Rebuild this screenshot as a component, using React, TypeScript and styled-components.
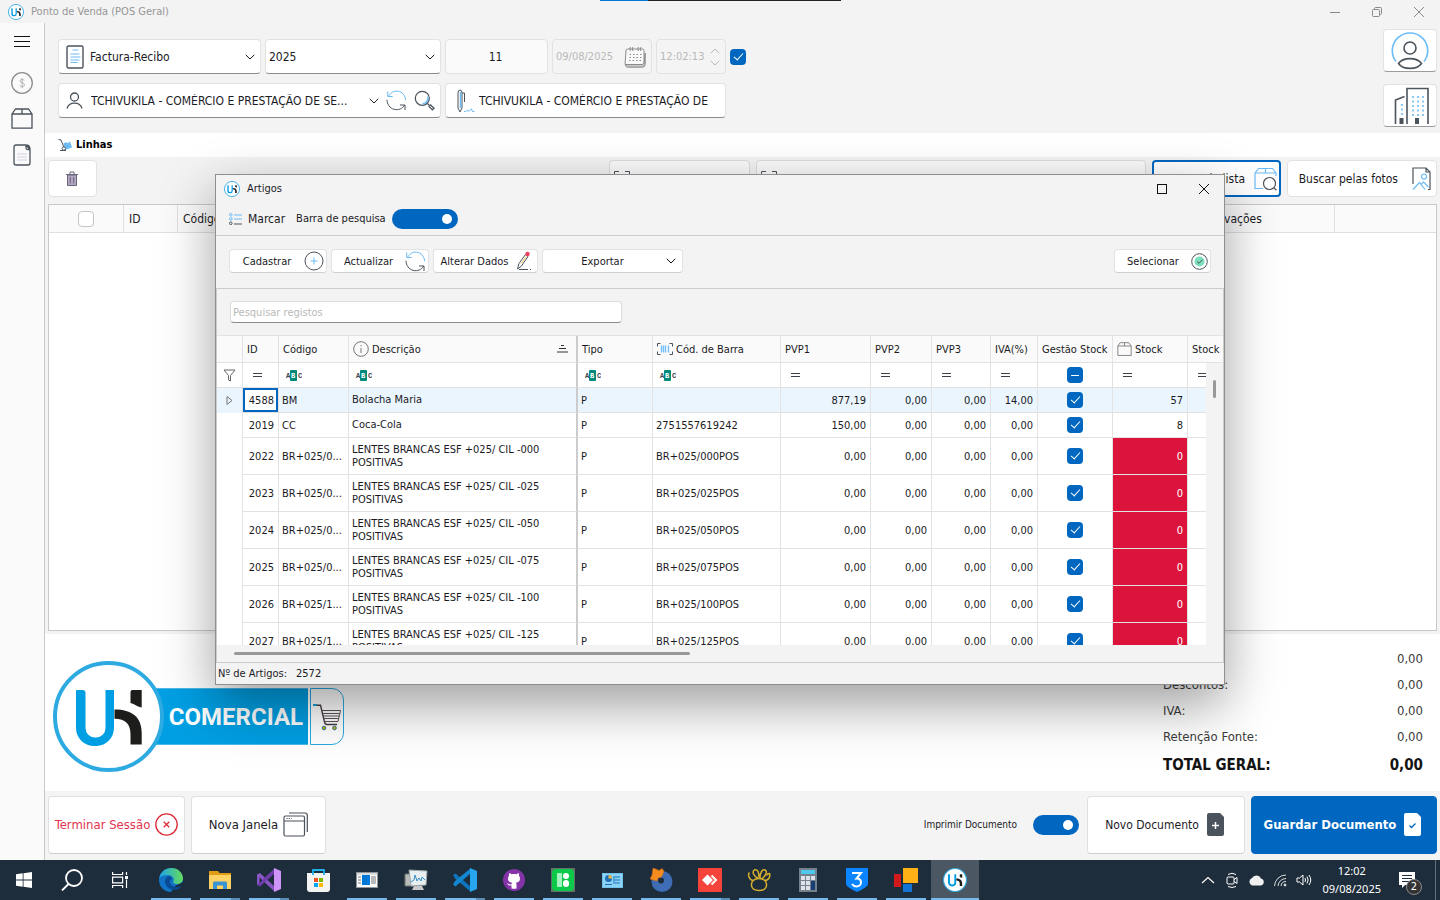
import React from "react";
import styled, { createGlobalStyle, css } from "styled-components";

const SANS = '"DejaVu Sans Condensed", "Noto Sans", "Liberation Sans", sans-serif';
const BLUE = "#0067c0";
const SKY = "#6cbcf7";
const INK = "#4b535c";

const GlobalStyle = createGlobalStyle`
  *, *::before, *::after { box-sizing: border-box; }
  body { margin: 0; background: #f3f3f3; overflow: hidden; }
  body, button, input, select { font-family: ${SANS}; color: #1b1b1f; }
  button, input, select { font-size: 12px; padding: 0; margin: 0; }
  svg { display: block; flex: none; }
`;

/* ---------- shell ---------- */

const Desktop = styled.div`
  position: relative;
  display: flex;
  flex-direction: column;
  min-height: 100vh;
  font-size: 12px;
  line-height: 16px;
`;

const TitleBar = styled.header`
  display: flex;
  align-items: center;
  justify-content: space-between;
  height: 23px;
  padding: 0 15px 0 8px;
  color: #969696;
  font-size: 11px;
`;

const TitleText = styled.div`
  display: flex;
  align-items: center;
  gap: 7px;
`;

const ScreenSliver = styled.div`
  position: absolute;
  top: 0;
  left: 600px;
  width: 241px;
  height: 1px;
  background: linear-gradient(to right, #0078d7 48px, #222 48px);
`;

const WindowControls = styled.div`
  display: flex;
  align-items: center;
  gap: 30px;
`;

const BareButton = styled.button`
  display: flex;
  align-items: center;
  justify-content: center;
  border: 0;
  background: none;
  gap: 5px;
`;

const Workspace = styled.div`
  display: flex;
  flex: 1;
`;

const Sidebar = styled.nav`
  display: flex;
  flex-direction: column;
  align-items: center;
  width: 45px;
  padding-top: 10px;
  gap: 11px;
  background: #fafafa;
  border-right: 1px solid #c8c8c8;

  button { height: 25px; }
  button:first-child { height: 18px; margin-bottom: 8px; }
`;

const Main = styled.main`
  display: flex;
  flex-direction: column;
  flex: 1;
  min-width: 0;
`;

/* ---------- document form ---------- */

const FormArea = styled.section`
  display: flex;
  justify-content: space-between;
  height: 110px;
  padding: 6px 3px 0 13px;
`;

const Fields = styled.div`
  display: flex;
  flex-direction: column;
  gap: 9px;
  padding-top: 10px;
`;

const FieldRow = styled.div`
  display: flex;
  align-items: center;
  gap: 4px;
`;

const Field = styled.div<{ $w: number; $tone?: "quiet" | "disabled" }>`
  display: flex;
  align-items: center;
  width: ${(p) => p.$w}px;
  height: 35px;
  padding: 0 5px 0 3px;
  gap: 4px;
  background: #fff;
  border: 1px solid #e2e2e2;
  border-bottom-color: #8c8c8c;
  border-radius: 4px;
  ${(p) => p.$tone && css`
    background: ${p.$tone === "quiet" ? "#fafafa" : "#f4f4f4"};
    border-bottom-color: #e2e2e2;
  `}
`;

const FieldTools = styled.div`
  display: flex;
  align-items: center;
  gap: 7px;
`;

const Select = styled.select`
  flex: 1;
  min-width: 0;
  height: 30px;
  border: 0;
  background: none;
  appearance: none;
  text-overflow: ellipsis;
  outline: 0;
`;

const TextInput = styled.input<{ $align?: string; $muted?: boolean }>`
  flex: 1;
  min-width: 0;
  width: 100%;
  border: 0;
  background: none;
  outline: 0;
  text-align: ${(p) => p.$align ?? "left"};
  ${(p) => p.$muted && "color: #b9b9b9; font-size: 11px;"}
`;

const Steppers = styled.div`
  display: flex;
  flex-direction: column;
  gap: 6px;
`;

const Check = styled.input.attrs({ type: "checkbox" })<{ $mixed?: boolean; $empty?: boolean }>`
  appearance: none;
  position: relative;
  display: block;
  flex: none;
  width: 16px;
  height: 16px;
  border-radius: 4px;
  background: ${(p) => (p.$empty ? "#fff" : BLUE)};
  border: ${(p) => (p.$empty ? "1px solid #c4c4c4" : "0")};

  &::after {
    content: "";
    display: ${(p) => (p.$empty ? "none" : "block")};
    position: absolute;
    ${(p) => p.$mixed
      ? css`left: 4px; top: 8px; width: 8px; height: 1px; background: #fff;`
      : css`
        left: 6px; top: 2px; width: 5px; height: 9px;
        border: solid #fff; border-width: 0 1px 1px 0;
        transform: rotate(42deg);
      `}
  }
`;

const QuickButtons = styled.div`
  display: flex;
  flex-direction: column;
  gap: 12px;
`;

const QuickButton = styled.button`
  display: flex;
  align-items: center;
  justify-content: center;
  width: 54px;
  height: 43px;
  background: #fff;
  border: 1px solid #e2e2e2;
  border-bottom-color: #9c9c9c;
  border-radius: 4px;
`;

/* ---------- lines ---------- */

const SectionTitle = styled.h2`
  display: flex;
  align-items: center;
  gap: 4px;
  height: 24px;
  margin: 0;
  padding-left: 13px;
  background: #fff;
  color: #000;
  font-size: 11px;
`;

const LineTools = styled.div`
  display: flex;
  gap: 6px;
  height: 47px;
  padding: 3px 3px 7px;
`;

const Spacer = styled.div`
  flex: 1;
`;

const ToolButton = styled.button<{ $w: number; $active?: boolean; $iconOnly?: boolean }>`
  display: flex;
  align-items: center;
  justify-content: ${(p) => (p.$iconOnly ? "center" : "flex-end")};
  gap: 9px;
  width: ${(p) => p.$w}px;
  height: 37px;
  padding-right: ${(p) => (p.$iconOnly ? 2 : p.$active ? 1 : 5)}px;
  background: #fff;
  border: ${(p) => (p.$active ? `2px solid ${BLUE}` : "1px solid #e2e2e2")};
  border-radius: 4px;
  white-space: nowrap;
`;

const ScanField = styled.label<{ $w: number }>`
  display: flex;
  align-items: center;
  width: ${(p) => p.$w}px;
  height: 37px;
  padding-left: 4px;
  background: #fafafa;
  border: 1px solid #dcdcdc;
  border-radius: 4px;
`;

const LinesFrame = styled.div`
  flex: 1;
  margin: 0 3px 3px;
  background: #fff;
  border: 1px solid #c8c8c8;
`;

const LinesTable = styled.table`
  width: 100%;
  table-layout: fixed;
  border-collapse: separate;
  border-spacing: 0;

  th {
    height: 28px;
    padding: 0 5px;
    background: #fafafa;
    border: solid #e0e0e0;
    border-width: 0 1px 1px 0;
    font-weight: 400;
    text-align: left;
    white-space: nowrap;
  }
  th:last-child { border-right: 0; }
  th input { margin: 0 auto; }
`;

/* ---------- totals ---------- */

const Summary = styled.section`
  display: flex;
  justify-content: space-between;
  height: 157px;
  padding: 12px 17px 0 8px;
  background: #fff;
`;

const Brand = styled.div`
  display: flex;
  align-items: center;
  height: 111px;
  margin-top: 15px;
`;

const BrandName = styled.div`
  display: flex;
  align-items: center;
  justify-content: flex-end;
  width: 156px;
  height: 57px;
  margin: 0 2px 0 -12px;
  padding-right: 5px;
  background: #009fe3;
  border: solid #4db8e8;
  border-width: 1px 0;
  color: #fff;
  font-family: Roboto, "Liberation Sans", sans-serif;
  font-weight: 700;
  font-size: 24px;
`;

const BrandMark = styled.div`
  position: relative;
  z-index: 1;
`;

const BrandCart = styled.div`
  display: flex;
  align-items: center;
  justify-content: center;
  width: 34px;
  height: 57px;
  border: 1px solid #29a9e0;
  border-radius: 0 12px 12px 0;
`;

const Totals = styled.dl`
  width: 260px;
  margin: 0;
  font-size: 13px;
  color: #3b3b3b;

  div {
    display: flex;
    justify-content: space-between;
    align-items: center;
    height: 26px;
  }
  dd { margin: 0; }
  div:last-child {
    height: 30px;
    color: #141414;
    font-weight: 700;
    font-size: 15px;
  }
`;

/* ---------- footer ---------- */

const Footer = styled.footer`
  display: flex;
  align-items: center;
  gap: 6px;
  height: 69px;
  padding: 0 3px 2px;
  background: #f4f4f4;
`;

const BigButton = styled.button<{ $w: number; $kind?: "danger" | "primary"; $small?: boolean }>`
  display: flex;
  align-items: center;
  justify-content: center;
  gap: 5px;
  width: ${(p) => p.$w}px;
  height: 58px;
  background: #fff;
  border: 1px solid #e0e0e0;
  border-bottom-color: #cfcfcf;
  border-radius: 4px;
  font-size: ${(p) => (p.$small ? 12 : 13)}px;
  white-space: nowrap;
  ${(p) => p.$kind === "danger" && "color: #e23450;"}
  ${(p) => p.$kind === "primary" && css`
    background: ${BLUE};
    border-color: ${BLUE};
    color: #fff;
    font-weight: 700;
  `}
`;

const SwitchLabel = styled.label<{ $gap: number; $size: number }>`
  display: flex;
  align-items: center;
  gap: ${(p) => p.$gap}px;
  margin-right: 2px;
  font-size: ${(p) => p.$size}px;
`;

const Switch = styled.input.attrs({ type: "checkbox", role: "switch" })<{ $w: number }>`
  appearance: none;
  position: relative;
  display: block;
  width: ${(p) => p.$w}px;
  height: 20px;
  border-radius: 10px;
  background: ${BLUE};

  &::after {
    content: "";
    position: absolute;
    right: 6px;
    top: 5px;
    width: 10px;
    height: 10px;
    border-radius: 50%;
    background: #fff;
  }
`;

/* ---------- dialog ---------- */

const Dialog = styled.section`
  position: absolute;
  inset: 174px 215px 215px;
  z-index: 5;
  display: flex;
  flex-direction: column;
  background: #f3f3f3;
  border: 1px solid #8f8f8f;
  box-shadow: 0 20px 50px rgba(0, 0, 0, 0.38);
  font-size: 11px;
`;

const DialogTitle = styled.div`
  display: flex;
  align-items: center;
  justify-content: space-between;
  height: 28px;
  padding: 0 14px 0 8px;
`;

const DialogMenu = styled.div`
  display: flex;
  align-items: center;
  gap: 11px;
  height: 33px;
  padding: 0 14px 0 13px;
  border-bottom: 1px solid #cccccc;
`;

const DialogActions = styled.div`
  display: flex;
  gap: 4px;
  height: 53px;
  padding: 13px 13px 0;
  border-bottom: 1px solid #cccccc;
`;

const ActionButton = styled.button<{ $w: number }>`
  display: flex;
  align-items: center;
  width: ${(p) => p.$w}px;
  height: 24px;
  padding: 0 2px 0 0;
  background: #fff;
  border: 1px solid #e2e2e2;
  border-bottom-color: #cfcfcf;
  border-radius: 4px;
  font-size: 11px;

  span { flex: 1; text-align: center; white-space: nowrap; }
`;

const GridPanel = styled.div`
  display: flex;
  flex-direction: column;
  flex: 1;
  min-height: 0;
  border: solid #cccccc;
  border-width: 0 1px 1px;
`;

const SearchRow = styled.div`
  height: 46px;
  padding: 12px 13px;
`;

const SearchInput = styled.input`
  display: block;
  width: 392px;
  height: 22px;
  padding: 0 2px;
  background: #fff;
  border: 1px solid #dcdcdc;
  border-bottom-color: #8c8c8c;
  border-radius: 4px;
  font-size: 11px;

  &::placeholder { color: #b9b9b9; }
`;

const GridViewport = styled.div`
  position: relative;
  flex: 1;
  overflow: hidden;
  background: #fff;
  border-top: 1px solid #e2e2e2;
`;

const GridTable = styled.table`
  width: 1061px;
  min-width: 100%;
  table-layout: fixed;
  border-collapse: separate;
  border-spacing: 0;
  font-size: 11px;
  line-height: 13px;
`;

const HeadCell = styled.th<{ $split?: boolean }>`
  height: 27px;
  padding: 0 4px;
  background: #fafafa;
  border: solid #e2e2e2;
  border-width: 0 1px 1px 0;
  ${(p) => p.$split && "border-right: 2px solid #cccccc;"}
  font-weight: 400;
  text-align: left;
  white-space: nowrap;
  overflow: hidden;
`;

const HeadLabel = styled.div`
  display: flex;
  align-items: center;
  gap: 3px;
`;

const FilterCell = styled.td<{ $split?: boolean }>`
  height: 25px;
  padding: 0 6px;
  border: solid #e2e2e2;
  border-width: 0 1px 1px 0;
  ${(p) => p.$split && "border-right: 2px solid #cccccc;"}

  input { margin: 0 auto; }
`;

type CellLook = {
  $align?: "right";
  $split?: boolean;
  $top?: boolean;
  $focus?: boolean;
  $alert?: boolean;
  $plain?: boolean;
};

const Cell = styled.td<CellLook>`
  height: 25px;
  padding: 0 4px 0 3px;
  border: solid #e2e2e2;
  border-width: ${(p) => (p.$plain ? "0 1px 0 0" : "0 1px 1px 0")};
  ${(p) => p.$split && "border-right: 2px solid #cccccc;"}
  text-align: ${(p) => p.$align ?? "left"};
  white-space: ${(p) => (p.$top ? "normal" : "nowrap")};
  overflow: hidden;
  text-overflow: ellipsis;
  ${(p) => p.$top && "padding: 5px 3px; vertical-align: top;"}
  ${(p) => p.$alert && "background: #dc143c; color: #fff;"}
  ${(p) => p.$focus && `box-shadow: inset 0 0 0 2px ${BLUE}; background: #fff;`}

  input { margin: 0 auto; }
`;

const BodyRow = styled.tr<{ $selected?: boolean }>`
  background: ${(p) => (p.$selected ? "#eaf5fe" : "#fff")};
`;

const VerticalScroll = styled.div`
  position: absolute;
  top: 27px;
  right: 0;
  bottom: 0;
  width: 17px;
  padding: 17px 0 0 7px;
  background: #f3f3f3;
`;

const HorizontalScroll = styled.div`
  height: 17px;
  padding: 7px 17px;
`;

const Thumb = styled.div<{ $w: string; $h: string }>`
  width: ${(p) => p.$w};
  height: ${(p) => p.$h};
  border-radius: 2px;
  background: #999999;
`;

const StatusBar = styled.div`
  display: flex;
  align-items: center;
  gap: 9px;
  height: 21px;
  padding-left: 2px;
`;

/* ---------- taskbar ---------- */

const Taskbar = styled.div`
  display: flex;
  height: 40px;
  background: #1e2d3b;
  color: #fff;
`;

const SystemKeys = styled.div`
  display: flex;
  margin-right: 3px;
`;

const TaskItem = styled.button<{ $open?: boolean; $stack?: boolean; $active?: boolean }>`
  position: relative;
  display: flex;
  align-items: center;
  justify-content: center;
  width: 48px;
  height: 40px;
  border: 0;
  background: ${(p) => (p.$active ? "#4b5762" : "none")};

  &::after {
    content: "";
    display: ${(p) => (p.$open ? "block" : "none")};
    position: absolute;
    bottom: 0;
    left: ${(p) => (p.$active ? 0 : 4)}px;
    right: ${(p) => (p.$active ? 0 : 4)}px;
    height: 2px;
    background: ${(p) =>
      p.$stack ? "linear-gradient(to right, #76b9ed 31px, #5a8bb3 31px)" : "#76b9ed"};
  }
`;

const TaskApps = styled.div`
  display: flex;
  flex: 1;
  gap: 1px;
`;

const Tray = styled.div`
  display: flex;
  align-items: center;
  gap: 8px;
  margin-right: 4px;
  padding-right: 20px;
  border-right: 1px solid #65717c;
`;

const Clock = styled.div`
  margin: 0 10px 0 2px;
  font-family: "Noto Sans", "Liberation Sans", sans-serif;
  font-size: 11px;
  line-height: 18px;
  text-align: center;
`;

const Notices = styled.div`
  position: relative;
`;

const NoticeCount = styled.span`
  position: absolute;
  left: 7px;
  top: 7px;
  width: 16px;
  height: 16px;
  border: 1px solid #8d8d8d;
  border-radius: 50%;
  background: #333;
  font-size: 11px;
  line-height: 14px;
  text-align: center;
`;

/* ---------- drawings ---------- */

type Pic = { w: number; h?: number; box: string; children: React.ReactNode; c?: string; sw?: number };

const Svg = ({ w, h, box, children, c = INK, sw = 1 }: Pic) => (
  <svg width={w} height={h ?? w} viewBox={box} fill="none" stroke={c} strokeWidth={sw} aria-hidden="true">
    {children}
  </svg>
);

const UkMark = ({ size, ring = 4 }: { size: number; ring?: number }) => (
  <Svg w={size} box="0 0 111 111">
    <circle cx="55.500" cy="55.500" r={55.5 - ring / 2} fill="#fff" stroke="#2daae1" strokeWidth={ring} />
    <path d="M24 29h5.500q3 0 3 3v35a9.500 9.500 0 0 0 9.500 9.500h1a9.500 9.500 0 0 0 9.500-9.500V29h8.500v38A18 18 0 0 1 43.500 85h-2A18 18 0 0 1 23 67V30q0-1 1-1z" fill="#009fe3" stroke="none" />
    <path d="M61.500 48.500C79 48.500 88.700 56 88.700 72v11.500H77.500V73c0-10-5-15-16-15.200z" fill="#1d1d1b" stroke="none" />
    <path d="M77.500 31q0-2 2-2h9.200v17.500c-4-.5-7-3.500-11.200-4.500z" fill="#1d1d1b" stroke="none" />
  </Svg>
);

const Chevron = ({ up, c = "#1b1b1b" }: { up?: boolean; c?: string }) => (
  <Svg w={10} h={6} box="0 0 10 6" c={c}>
    <path d={up ? "M.7 5.200 5 1l4.300 4.200" : "M.7.800 5 5 9.300.800"} />
  </Svg>
);

const CloseIcon = ({ c }: { c: string }) => (
  <Svg w={12} box="0 0 12 12" c={c}><path d="M1 1l10 10M11 1 1 11" /></Svg>
);

const RefreshIcon = () => (
  <Svg w={21} box="0 0 21 21">
    <path d="M2.500 6.500C5 1 11 0 15 2.200c2.500 1.500 4.500 4.500 4.700 8M1.700 1.500v5h5" stroke={SKY} />
    <path d="M1 9.800c0 4.500 3 8.500 7 9.500 4.500 1.200 8.500-.6 10.700-4.300M14 15h5v5" />
  </Svg>
);

const SearchIcon = () => (
  <Svg w={21} box="0 0 21 21" sw={1.3}>
    <circle cx="8.300" cy="8.300" r="7" />
    <path d="M14 6.500c.6 4-2 7-5.500 7.600" stroke={SKY} strokeWidth="1.500" />
    <path d="M13.300 13.500l2 1.800M15 16.600l1.600-1.600 3.400 3.200-1.600 1.600z" />
  </Svg>
);

const DocIcon = () => (
  <Svg w={24} box="-4 0 24 24" sw={1.4}>
    <rect x="1" y="1" width="16" height="22" rx="1.500" />
    <path d="M6.500 5h6M4.500 9h9M4.500 12h10M4.500 15h9M4.500 17.500h7" stroke={SKY} strokeWidth="1" />
  </Svg>
);

const PersonIcon = () => (
  <Svg w={25} h={17} box="-4 0 25 17" sw={1.3}>
    <circle cx="8.500" cy="5" r="4" />
    <path d="M1 16.500c1-3.500 4-5.300 7.500-5.300s6.500 1.800 7.500 5.300" />
  </Svg>
);

const PenIcon = () => (
  <Svg w={26} h={24} box="-7 0 26 24">
    <path d="M2 4q0-3 2-3t2 3v15l-2 4-2-4zM6 4h2.500v9" />
    <path d="M4.500 3v16" stroke={SKY} strokeWidth="1.500" />
    <path d="M8 22.500h1.500l2-1.500 1 1.500 3-2.500 1 2.500h2" stroke={SKY} />
  </Svg>
);

const CalendarIcon = () => (
  <Svg w={22} box="0 0 22 22" c="#8b8b8b">
    <path d="M1.500 18.500q0 2.700 2 2.700h15q2.700 0 2.700-3V7L20 17.500z" fill="#c6c6c6" />
    <path d="M2 4.500Q2 3 3.500 3h15Q20 3 20 4.500v11.500q0 2.500-2 2.500H1z" fill="#fafafa" />
    <path d="M6.500 1q-1.500 2 0 4M9 1q-1.500 2 0 4M14.500 1q-1.500 2 0 4M17 1q-1.500 2 0 4" />
    <path d="M5.500 8.500h12M5.500 11.500h12M5 14.500h12" strokeDasharray="1.500 2" />
  </Svg>
);

const BoxIcon = ({ size = 22, c = INK }: { size?: number; c?: string }) => (
  <Svg w={size} h={Math.round(size * 0.95)} box="0 0 22 21" c={c} sw={1.3}>
    <path d="M1 6h20V20.200H1zM1 6 4.500 1h13L21 6M11 1v5" />
  </Svg>
);

const TrashIcon = () => (
  <Svg w={14} h={16} box="0 0 14 16" c="#6d6579">
    <path d="M2.500 4h9v10.500h-9z" fill="#b3a8c6" />
    <path d="M1 3.500h12M5 3V1h4v2M5.300 6v6.500M8.700 6v6.500" />
  </Svg>
);

const TrolleyIcon = () => (
  <Svg w={14} h={12} box="0 0 14 12">
    <path d="M5.500 4.500 8 3l1.500 1.200L12 2.500l2 6-7 2.500z" fill={SKY} stroke="none" />
    <path d="M.5.500 3 1l3 7.500M2 11.500h6" />
    <circle cx="5.800" cy="9.500" r="1.700" fill="#fff" />
  </Svg>
);

const BracketIcon = ({ bars }: { bars?: boolean }) => (
  <Svg w={16} h={bars ? 12 : 16} box={bars ? "0 0 16 12" : "0 0 16 16"}>
    {bars ? (
      <>
        <path d="M3.500.5h-3v3M12.500.5h3v3M.5 8.500v3h3M15.500 8.500v3h-3" />
        <path d="M4.500 2.500v7M6.500 2.500v7M8.500 2.500v7M11.500 2.500v7" stroke={SKY} strokeWidth="1.300" />
      </>
    ) : (
      <path d="M5 .5H.5V5M11 .5h4.500V5M.5 11v4.500H5M15.500 11v4.500H11" />
    )}
  </Svg>
);

const BoxSearchIcon = () => (
  <Svg w={24} box="0 0 24 24" c={SKY} sw={1.2}>
    <path d="M9 21.500H1V6h21v3M1 6l3.500-4.500h14L22 6M11.500 1.500V6" />
    <circle cx="15.500" cy="16.500" r="6" stroke={INK} />
    <path d="m20 21 2.500 2.300" stroke={INK} />
  </Svg>
);

const PhotoIcon = () => (
  <Svg w={24} box="-5 0 24 24" sw={1.2}>
    <path d="M1 17V1h13l4 4v17.500h-2M14 1v4h4" />
    <circle cx="12" cy="9.500" r="2.500" stroke={SKY} />
    <path d="m1 22.500 6.500-7 5.500 7M9.500 17l2-2 5 5" stroke={SKY} />
  </Svg>
);

const AbcIcon = () => (
  <svg width="17" height="11" viewBox="0 0 17 11" aria-hidden="true">
    <rect x="5" y="0" width="7" height="11" rx="1" fill="#00897b" />
    <g fontFamily="Liberation Mono, monospace" fontSize="7" fontWeight="700">
      <text x="1" y="8" fill="#3a4149">A</text>
      <text x="6" y="8" fill="#fff">B</text>
      <text x="13" y="8" fill="#3a4149">C</text>
    </g>
  </svg>
);

const EqualIcon = () => (
  <Svg w={17} h={4} box="0 0 17 4"><path d="M4 .500h9M4 3.500h9" stroke="#3a4149" /></Svg>
);

const CartIcon = () => (
  <Svg w={29} h={28} box="0 0 29 28">
    <path d="M1 2.200h6.500L11.500 19q.5 2.500 2.500 2.500h10" stroke="#453b43" strokeWidth="1.400" />
    <path d="M8.500 7.500h19l-2.500 11H11.500M9.500 10.500h17M10 13h16M10.500 15.500H25" stroke="#5d535b" />
    <path d="M0 2h4" stroke="#18a0d0" strokeWidth="2" />
    <circle cx="11" cy="25" r="1.800" fill="#d9b310" stroke="#27708b" />
    <circle cx="21.500" cy="25" r="1.800" fill="#d9b310" stroke="#27708b" />
  </Svg>
);

/* ---------- taskbar drawings ---------- */

const StartLogo = () => (
  <svg width="16" height="16" viewBox="0 0 16 16" fill="#fff" aria-hidden="true">
    <path d="M0 2.200 6.700 1.300v6.300H0zM7.500 1.200 16 0v7.600H7.500zM0 8.400h6.700v6.300L0 13.800zM7.500 8.400H16V16l-8.500-1.200z" />
  </svg>
);

const TaskSearch = () => (
  <Svg w={22} box="0 0 22 22" c="#fff" sw={1.8}><circle cx="13" cy="9" r="8" /><path d="M7.500 15 1 21.500" /></Svg>
);

const TaskView = () => (
  <Svg w={16} box="0 0 16 16" c="#fff" sw={1.2}>
    <path d="M.6 0v2.500h10V0M.6 16v-2.500h10V16M.6 5.200h10v5.600H.6zM14.500 0v3M14.500 7.500V16" />
    <path d="M13 4h3v3h-3z" fill="#fff" stroke="none" />
  </Svg>
);

const EdgeLogo = () => (
  <svg width="24" height="24" viewBox="0 0 24 24" aria-hidden="true">
    <defs>
      <linearGradient id="edgeTop" x1="0" x2="1"><stop offset="0" stopColor="#1fa4e6" /><stop offset="1" stopColor="#64dc5c" /></linearGradient>
    </defs>
    <circle cx="12" cy="12" r="12" fill="#1173c7" />
    <path d="M24 14v10H12l4-6z" fill="#1e2d3b" />
    <path d="M9 8.500c-3.500 1.500-4 6-1.500 9.500s7 4.500 12 3c1-.5 2.500-2 3-3-3.500 1.700-9 1.500-11-2-1.300-2.500-.5-4.500 1.500-5.500-.8-1.500-2.500-2.500-4-2z" fill="#0b4a94" />
    <path d="M.3 10C1.500 4 6.500 0 12.500 0 19 0 24 5 24 10.500c0 3.500-3 5.500-6 5.500-3 0-4.500-1-3.700-2.500C16 10.500 13 7 9 7 5 7 1.500 8 .3 10z" fill="url(#edgeTop)" />
  </svg>
);

const FolderLogo = () => (
  <svg width="22" height="19" viewBox="0 0 22 19" aria-hidden="true">
    <path d="M0 0h9l1.500 2H22v16H0z" fill="#e09c12" /><path d="M0 4h22v14H0z" fill="#fdd365" />
    <path d="M4 18v-6q0-1.500 1.500-1.500h11Q18 10.500 18 12v6h-4v-3.500H8V18z" fill="#3a94d4" />
  </svg>
);

const VisualStudioLogo = ({ a, b, c }: { a: string; b: string; c: string }) => (
  <svg width="24" height="24" viewBox="0 0 24 24" aria-hidden="true">
    <path d="M0 7l2.500-1.500L18 19v5L2 10.500z" fill={a} />
    <path d="M0 16.500 2.500 18.500 18 5V0L2 13z" fill={b} />
    <path d="M17 0l7 3v18l-7 3z" fill={c} />
  </svg>
);

const StudioLogo = () => (
  <svg width="24" height="24" viewBox="0 0 24 24" aria-hidden="true">
    <path d="M0 6.500 3 5l15 14v5L2.500 9.500v6L0 17z" fill="#8a55c4" />
    <path d="M0 17l3 1.500L18 5V0L9 8.500 2.500 15z" fill="#6f3cab" />
    <path d="M17 0l7 3v18l-7 3z" fill="#cf94f7" />
  </svg>
);

const StoreLogo = () => (
  <svg width="23" height="23" viewBox="0 0 23 23" aria-hidden="true">
    <path d="M0 4h23v16q0 3-3 3H3q-3 0-3-3z" fill="#f3f3f3" />
    <path d="M6 6V1h11v5" fill="none" stroke="#1fb0ee" strokeWidth="1.800" />
    <path d="M7 9h4v4H7z" fill="#f25022" /><path d="M12 9h4v4h-4z" fill="#7fba00" />
    <path d="M7 14h4v4H7z" fill="#00a4ef" /><path d="M12 14h4v4h-4z" fill="#ffb900" />
  </svg>
);

const WindowLogo = () => (
  <svg width="22" height="16" viewBox="0 0 22 16" aria-hidden="true">
    <path d="M0 0h22v16H0z" fill="#8d949b" /><path d="M1 1h20v14H1z" fill="#fbfbfb" /><path d="M1 1h20v2H1z" fill="#dadcde" />
    <path d="M6 3h8v10H6z" fill="#0078d7" /><path d="M2 5h3M2 8h3M2 11h3M15 5h5M15 7h5M15 9h5M15 11h5" stroke="#777" />
  </svg>
);

const MonitorLogo = () => (
  <svg width="24" height="22" viewBox="0 0 24 22" aria-hidden="true">
    <path d="M1 5h10v12H1z" fill="#b9bcb9" stroke="#6e726f" /><path d="M10 17h8l2 4H8z" fill="#c9c9c9" />
    <path d="M5 1l18 1-1 14-15 1z" fill="#e9eef0" stroke="#9aa3a6" />
    <path d="M7 13l3-2 1-5 2 6 2-3 2 3 1-4 3 3" fill="none" stroke="#3390c8" />
  </svg>
);

const GithubLogo = () => (
  <svg width="22" height="22" viewBox="0 0 22 22" aria-hidden="true">
    <circle cx="11" cy="11" r="11" fill="#8534a8" />
    <path d="M8.500 19.500v-3c-3 .5-3.500-1-4.300-2 2 0 2 1.500 4.300 1 0-1 .3-1.300.6-1.700C6.500 13.500 5 12 5 9.500c0-1 .4-2 1-2.700-.2-.8-.2-1.800.2-2.600 1 0 1.800.5 2.600 1 1.400-.3 3-.3 4.400 0 .8-.5 1.600-1 2.600-1 .4.800.4 1.800.2 2.600.6.700 1 1.700 1 2.700 0 2.500-1.500 4-4.100 4.300.4.400.6 1 .6 1.700v4q-2.500.7-5 0z" fill="#fff" />
  </svg>
);

const GreenLogo = () => (
  <svg width="24" height="24" viewBox="0 0 24 24" aria-hidden="true">
    <path d="M0 0h24v24H0z" fill="#64716b" /><rect x="1" y="1" width="22" height="22" rx="4" fill="#0cc94a" />
    <rect x="6" y="5" width="5" height="14" rx="1" fill="#a5f3c0" /><circle cx="15" cy="8" r="3" fill="#fff" /><rect x="12" y="12" width="6" height="7" rx="3" fill="#fff" />
  </svg>
);

const PanelLogo = () => (
  <svg width="21" height="15" viewBox="0 0 21 15" aria-hidden="true">
    <path d="M0 0h21v15H0z" fill="#6ec3ee" /><path d="M1 1h19v13H1z" fill="#8bd4f7" />
    <circle cx="6.500" cy="5.500" r="3.500" fill="#1d6fb8" /><path d="M6.500 5.500V2a3.500 3.500 0 0 1 3.500 3.500z" fill="#f4b73e" />
    <path d="M3 11.500h7M13 4h5M13 7h5M13 10h5M12 3v8" stroke="#1d6fb8" />
  </svg>
);

const PuzzleLogo = () => (
  <svg width="23" height="24" viewBox="0 0 23 24" aria-hidden="true">
    <circle cx="12" cy="13.500" r="10.500" fill="#3e6db5" /><circle cx="11" cy="12.500" r="3" fill="#1e2d3b" />
    <path d="M3 0l4 1.500L9 2.500 12 .500 14 3l-1.500 4L11 9.500H8.500L7 13l-4-1L0 11l2-4z" fill="#f58a1f" stroke="#c36610" strokeWidth=".5" />
  </svg>
);

const AnyDeskLogo = () => (
  <svg width="24" height="24" viewBox="0 0 24 24" aria-hidden="true">
    <path d="M0 0h24v24H0z" fill="#f4433a" /><path d="M9.500 6.500 15 12l-5.500 5.500L4 12z" fill="#fff" />
    <path d="m13.500 7.500 4.500 4.500-4.500 4.500" fill="none" stroke="#fff" strokeWidth="2" />
  </svg>
);

const PawLogo = () => (
  <Svg w={24} box="0 0 24 24" c="#d6b02c" sw={1.5}>
    <path d="M12 10.500c5 0 8 3 7.500 7-.5 3.500-4 5-7.500 5s-7-1.500-7.500-5c-.5-4 2.500-7 7.500-7z" />
    <path d="M11 10C6 8 5 3.500 7.500 1.800 11 .8 12 5 12 9.500M13 10c0-5 2-9 5-8 3 1.500.5 6-3 8.500" />
    <path d="M6 12.500C2 12 .5 6.500 2.500 4.500M18 12.500c4 0 5.500-4.500 4.500-7-1.500 0-2.500 1-3 2" />
  </Svg>
);

const CalculatorLogo = () => (
  <svg width="18" height="24" viewBox="0 0 18 24" aria-hidden="true">
    <path d="M0 0h18v24H0z" fill="#75818d" /><path d="M2 2h14v4H2z" fill="#4fc8ee" />
    <path d="M2 8h4v4H2zM7 8h4v4H7zM12 8h4v4h-4zM2 13h4v4H2zM7 13h4v4H7zM2 18h4v4H2zM7 18h4v4H7z" fill="#dde3e8" /><path d="M12 13h4v9h-4z" fill="#173f73" />
  </svg>
);

const ShieldLogo = () => (
  <svg width="22" height="24" viewBox="0 0 22 24" aria-hidden="true">
    <path d="M0 0h22v16q0 3-11 8Q0 19 0 16z" fill="#0a84ff" />
    <path d="M6 5h9l-4.500 5.500c6-.5 6 8 0 8-2.500 0-3.500-1-4.500-2.500" fill="none" stroke="#fff" strokeWidth="2" />
  </svg>
);

const BlocksLogo = () => (
  <svg width="24" height="24" viewBox="0 0 24 24" aria-hidden="true">
    <path d="M9 0h15v15H9z" fill="#ffb116" /><path d="M0 6h7v13H0z" fill="#d31a1a" /><path d="M9 16h9v8H9z" fill="#1374d6" />
  </svg>
);

/* ---------- data ---------- */

type Article = {
  id: number; code: string; text: string; barcode: string;
  pvp1: string; iva: string; stock: number;
};

const lens = (id: number, code: string, power: string): Article => ({
  id, code, text: `LENTES BRANCAS ESF +025/ CIL -${power} POSITIVAS`,
  barcode: `BR+025/${power}POS`, pvp1: "0,00", iva: "0,00", stock: 0,
});

const articles: Article[] = [
  { id: 4588, code: "BM", text: "Bolacha Maria", barcode: "", pvp1: "877,19", iva: "14,00", stock: 57 },
  { id: 2019, code: "CC", text: "Coca-Cola", barcode: "2751557619242", pvp1: "150,00", iva: "0,00", stock: 8 },
  lens(2022, "BR+025/0...", "000"),
  lens(2023, "BR+025/0...", "025"),
  lens(2024, "BR+025/0...", "050"),
  lens(2025, "BR+025/0...", "075"),
  lens(2026, "BR+025/1...", "100"),
  lens(2027, "BR+025/1...", "125"),
];

const columnWidths = [26, 36, 70, 229, 75, 128, 90, 61, 59, 47, 75, 75, 90];

const taskApps: { name: string; icon: React.ReactNode; stack?: boolean; closed?: boolean; active?: boolean }[] = [
  { name: "Edge", icon: <EdgeLogo /> },
  { name: "Explorador", icon: <FolderLogo />, stack: true },
  { name: "Visual Studio", icon: <StudioLogo />, stack: true },
  { name: "Store", icon: <StoreLogo />, closed: true },
  { name: "Janela", icon: <WindowLogo /> },
  { name: "Monitor", icon: <MonitorLogo /> },
  { name: "VS Code", icon: <VisualStudioLogo a="#0f74bd" b="#1286cf" c="#27a5ee" />, stack: true },
  { name: "GitHub", icon: <GithubLogo /> },
  { name: "Icons", icon: <GreenLogo /> },
  { name: "Painel", icon: <PanelLogo /> },
  { name: "Plugin", icon: <PuzzleLogo /> },
  { name: "AnyDesk", icon: <AnyDeskLogo />, stack: true },
  { name: "Navicat", icon: <PawLogo /> },
  { name: "Calculadora", icon: <CalculatorLogo /> },
  { name: "Escudo", icon: <ShieldLogo /> },
  { name: "Blocos", icon: <BlocksLogo /> },
  { name: "UK Comercial", icon: <UkMark size={24} ring={5} />, active: true },
];

/* ---------- parts ---------- */

const ArticleGrid = () => (
  <GridViewport>
    <GridTable>
      <colgroup>{columnWidths.map((w, i) => <col key={i} width={w} />)}</colgroup>
      <thead>
        <tr>
          <HeadCell />
          <HeadCell>ID</HeadCell>
          <HeadCell>Código</HeadCell>
          <HeadCell $split>
            <HeadLabel>
              <Svg w={16} box="0 0 16 16" c="#777"><circle cx="8" cy="8" r="7.300" /><path d="M8 7v5M8 4v1.300" /></Svg>
              Descrição
              <Spacer />
              <Svg w={19} h={8} box="0 0 19 8" c="#333"><path d="M8 .5h3M6 3.500h7M4 7h11" /></Svg>
            </HeadLabel>
          </HeadCell>
          <HeadCell>Tipo</HeadCell>
          <HeadCell><HeadLabel><BracketIcon bars />Cód. de Barra</HeadLabel></HeadCell>
          <HeadCell>PVP1</HeadCell>
          <HeadCell>PVP2</HeadCell>
          <HeadCell>PVP3</HeadCell>
          <HeadCell>IVA(%)</HeadCell>
          <HeadCell>Gestão Stock</HeadCell>
          <HeadCell><HeadLabel><BoxIcon size={15} c="#777" />Stock</HeadLabel></HeadCell>
          <HeadCell>Stock Mínimo</HeadCell>
        </tr>
      </thead>
      <tbody>
        <tr>
          <FilterCell>
            <Svg w={13} box="0 0 13 13" c="#666"><path d="M1 1h11L7.500 6.500V12l-2-1V6.500z" /></Svg>
          </FilterCell>
          <FilterCell><EqualIcon /></FilterCell>
          <FilterCell><AbcIcon /></FilterCell>
          <FilterCell $split><AbcIcon /></FilterCell>
          <FilterCell><AbcIcon /></FilterCell>
          <FilterCell><AbcIcon /></FilterCell>
          <FilterCell><EqualIcon /></FilterCell>
          <FilterCell><EqualIcon /></FilterCell>
          <FilterCell><EqualIcon /></FilterCell>
          <FilterCell><EqualIcon /></FilterCell>
          <FilterCell><Check $mixed aria-label="Filtrar gestão de stock" /></FilterCell>
          <FilterCell><EqualIcon /></FilterCell>
          <FilterCell><EqualIcon /></FilterCell>
        </tr>
        {articles.map((a, i) => (
          <BodyRow key={a.id} $selected={i === 0}>
            <Cell $plain>
              {i === 0 && <Svg w={17} h={11} box="0 0 17 11" c="#777"><path d="M7 1.500v8l5-4z" /></Svg>}
            </Cell>
            <Cell $align="right" $focus={i === 0}>{a.id}</Cell>
            <Cell>{a.code}</Cell>
            <Cell $split $top>{a.text}</Cell>
            <Cell>P</Cell>
            <Cell>{a.barcode}</Cell>
            <Cell $align="right">{a.pvp1}</Cell>
            <Cell $align="right">0,00</Cell>
            <Cell $align="right">0,00</Cell>
            <Cell $align="right">{a.iva}</Cell>
            <Cell><Check defaultChecked aria-label={`Gestão de stock ${a.id}`} /></Cell>
            <Cell $align="right" $alert={a.stock === 0}>{a.stock}</Cell>
            <Cell />
          </BodyRow>
        ))}
      </tbody>
    </GridTable>
    <VerticalScroll><Thumb $w="3px" $h="18px" /></VerticalScroll>
  </GridViewport>
);

const ArticlesDialog = () => (
  <Dialog role="dialog" aria-label="Artigos">
    <DialogTitle>
      <TitleText><UkMark size={16} ring={6} />Artigos</TitleText>
      <WindowControls>
        <BareButton aria-label="Maximizar">
          <Svg w={12} box="0 0 12 12" c="#111"><rect x="1.500" y="1.500" width="9" height="9" /></Svg>
        </BareButton>
        <BareButton aria-label="Fechar"><CloseIcon c="#111" /></BareButton>
      </WindowControls>
    </DialogTitle>
    <DialogMenu>
      <BareButton>
        <Svg w={14} h={12} box="0 0 14 12">
          <path d="M5 2h8M5 6h8" stroke={SKY} /><path d="M5 11h8" />
          <circle cx="1.800" cy="1.800" r="1.300" stroke={SKY} /><circle cx="1.800" cy="6" r="1.300" stroke={SKY} /><circle cx="1.800" cy="10.300" r="1.300" />
        </Svg>
        Marcar
      </BareButton>
      <SwitchLabel $gap={6} $size={11}>Barra de pesquisa<Switch $w={66} defaultChecked /></SwitchLabel>
    </DialogMenu>
    <DialogActions>
      <ActionButton $w={98}>
        <span>Cadastrar</span>
        <Svg w={20} box="0 0 20 20"><circle cx="10" cy="10" r="9" /><path d="M10 6.500v7M6.500 10h7" stroke={SKY} /></Svg>
      </ActionButton>
      <ActionButton $w={98}><span>Actualizar</span><RefreshIcon /></ActionButton>
      <ActionButton $w={105}>
        <span>Alterar Dados</span>
        <Svg w={20} box="0 0 20 20">
          <path d="M2.500 18 4 12.500 10.500 3.500l2.500 2L6.500 15z" />
          <path d="M6 12.500l5.500-7" stroke="#e3c35a" />
          <circle cx="12.500" cy="3" r="2.200" fill="#f0405f" stroke="none" />
          <path d="M4 18.500h9M15 18.500h1" />
        </Svg>
      </ActionButton>
      <ActionButton $w={141}>
        <span>Exportar</span>
        <Svg w={18} h={6} box="0 0 18 6" c="#111"><path d="M4.700.800 9 5 13.300.800" /></Svg>
      </ActionButton>
      <Spacer />
      <ActionButton $w={97}>
        <span>Selecionar</span>
        <Svg w={17} box="0 0 17 17"><circle cx="8.500" cy="8.500" r="7.800" /><circle cx="8.500" cy="8.500" r="5" fill="#7ce0bd" stroke="none" /><path d="M6 8.500 8 10.300l3.500-3.600" /></Svg>
      </ActionButton>
    </DialogActions>
    <GridPanel>
      <SearchRow><SearchInput placeholder="Pesquisar registos" aria-label="Pesquisar registos" /></SearchRow>
      <ArticleGrid />
      <HorizontalScroll><Thumb $w="456px" $h="3px" /></HorizontalScroll>
    </GridPanel>
    <StatusBar><span>Nº de Artigos:</span><span>2572</span></StatusBar>
  </Dialog>
);

const DocumentForm = () => (
  <FormArea>
    <Fields>
      <FieldRow>
        <Field $w={203}>
          <DocIcon />
          <Select aria-label="Tipo de documento"><option>Factura-Recibo</option></Select>
          <Chevron />
        </Field>
        <Field $w={176}>
          <Select aria-label="Série"><option>2025</option></Select>
          <Chevron />
        </Field>
        <Field $w={103} $tone="quiet"><TextInput aria-label="Número" defaultValue="11" $align="center" /></Field>
        <Field $w={100} $tone="disabled">
          <TextInput aria-label="Data" defaultValue="09/08/2025" $muted disabled />
          <CalendarIcon />
        </Field>
        <Field $w={70} $tone="disabled">
          <TextInput aria-label="Hora" defaultValue="12:02:13" $muted disabled />
          <Steppers><Chevron up c="#b9b9b9" /><Chevron c="#b9b9b9" /></Steppers>
        </Field>
        <Check defaultChecked aria-label="Data e hora automáticas" />
      </FieldRow>
      <FieldRow>
        <Field $w={383}>
          <PersonIcon />
          <Select aria-label="Cliente"><option>TCHIVUKILA - COMÉRCIO E PRESTAÇÃO DE SE...</option></Select>
          <FieldTools>
            <Chevron />
            <BareButton aria-label="Actualizar clientes"><RefreshIcon /></BareButton>
            <BareButton aria-label="Procurar cliente"><SearchIcon /></BareButton>
          </FieldTools>
        </Field>
        <Field $w={281}>
          <PenIcon />
          <TextInput aria-label="Nome do cliente" defaultValue="TCHIVUKILA - COMÉRCIO E PRESTAÇÃO DE" />
        </Field>
      </FieldRow>
    </Fields>
    <QuickButtons>
      <QuickButton aria-label="Utilizador">
        <Svg w={38} box="0 0 38 38" sw={1.6}>
          <path d="M5 29.500A17.700 17.700 0 1 1 33 29.500" stroke={SKY} />
          <circle cx="19" cy="16" r="6" /><path d="M7.500 31.500C12 25 26 25 30.500 31.500 26 38 12 38 7.500 31.500z" />
        </Svg>
      </QuickButton>
      <QuickButton aria-label="Empresa">
        <Svg w={38} box="0 0 38 38" sw={1.6}>
          <path d="M16 37V1.500h21V37M4.500 37V13l9-3.500" />
          <path d="M8.500 31h4v6h-4zM24 31h4v6h-4z" fill={INK} stroke="none" />
          <path d="M22 9v22M27 9v20M32 9v22M11 17v12" stroke={SKY} strokeDasharray="2 2.500" />
        </Svg>
      </QuickButton>
    </QuickButtons>
  </FormArea>
);

export default function App() {
  return (
    <Desktop>
      <GlobalStyle />
      <ScreenSliver />
      <TitleBar>
        <TitleText><UkMark size={16} ring={6} />Ponto de Venda (POS Geral)</TitleText>
        <WindowControls>
          <BareButton aria-label="Minimizar"><Svg w={12} box="0 0 12 12" c="#8a8a8a"><path d="M1 6.500h10" /></Svg></BareButton>
          <BareButton aria-label="Restaurar">
            <Svg w={12} box="0 0 12 12" c="#8a8a8a"><rect x="1.500" y="3.500" width="7" height="7" rx="1" /><path d="M3.500 3V2.500q0-1 1-1H9.500q1 0 1 1V7.500q0 1-1 1H9" /></Svg>
          </BareButton>
          <BareButton aria-label="Fechar"><CloseIcon c="#8a8a8a" /></BareButton>
        </WindowControls>
      </TitleBar>
      <Workspace>
        <Sidebar>
          <BareButton aria-label="Menu"><Svg w={16} h={12} box="0 0 16 12" c="#111"><path d="M0 .500h16M0 5.500h16M0 10.500h16" /></Svg></BareButton>
          <BareButton aria-label="Vendas">
            <Svg w={22} box="0 0 22 22" c="#8d8d8d"><circle cx="11" cy="11" r="10.300" strokeWidth="1.300" /><path d="M13.300 8.500C12.500 6.800 9 7 9 9c0 2.200 4.500 1.500 4.500 4 0 2-4 2.300-4.800.3M11.200 6v10" stroke="#b3b3b3" /></Svg>
          </BareButton>
          <BareButton aria-label="Artigos"><BoxIcon /></BareButton>
          <BareButton aria-label="Documentos">
            <Svg w={18} h={22} box="0 0 18 22" sw={1.3}><path d="M13 1H3Q1 1 1 3v16q0 2 2 2h12q2 0 2-2V5.500zM13 1q4 0 4 4.500h-2.500Q13 5.500 13 4z" /><path d="M4 10h10M4 13h10M4 16h10" stroke="#e0e0ea" /></Svg>
          </BareButton>
        </Sidebar>
        <Main>
          <DocumentForm />
          <SectionTitle><TrolleyIcon />Linhas</SectionTitle>
          <LineTools>
            <ToolButton $w={49} $iconOnly aria-label="Eliminar linha"><TrashIcon /></ToolButton>
            <Spacer />
            <ScanField $w={141}><BracketIcon /><TextInput aria-label="Código" /></ScanField>
            <ScanField $w={390}><BracketIcon /><TextInput aria-label="Código de barras" /></ScanField>
            <ToolButton $w={129} $active>Buscar pela lista<BoxSearchIcon /></ToolButton>
            <ToolButton $w={150}>Buscar pelas fotos<PhotoIcon /></ToolButton>
          </LineTools>
          <LinesFrame>
            <LinesTable>
              <colgroup><col width="75" /><col width="54" /><col /><col width="148" /><col width="101" /></colgroup>
              <thead>
                <tr>
                  <th><Check $empty aria-label="Seleccionar todas" /></th>
                  <th>ID</th>
                  <th>Código</th>
                  <th>Observações</th>
                  <th />
                </tr>
              </thead>
            </LinesTable>
          </LinesFrame>
          <Summary>
            <Brand>
              <BrandMark><UkMark size={111} /></BrandMark>
              <BrandName>COMERCIAL</BrandName>
              <BrandCart><CartIcon /></BrandCart>
            </Brand>
            <Totals>
              <div><dt /><dd>0,00</dd></div>
              <div><dt>Descontos:</dt><dd>0,00</dd></div>
              <div><dt>IVA:</dt><dd>0,00</dd></div>
              <div><dt>Retenção Fonte:</dt><dd>0,00</dd></div>
              <div><dt>TOTAL GERAL:</dt><dd>0,00</dd></div>
            </Totals>
          </Summary>
          <Footer>
            <BigButton $w={137} $kind="danger">
              Terminar Sessão
              <Svg w={23} box="0 0 23 23" c="#dc2c38" sw={1.3}><circle cx="11.500" cy="11.500" r="10.700" /><path d="m8.700 8.700 5.600 5.600M14.300 8.700l-5.600 5.600" /></Svg>
            </BigButton>
            <BigButton $w={135}>
              Nova Janela
              <Svg w={25} box="0 0 25 25" sw={1.2}><rect x="1" y="4" width="20.500" height="20" rx="1.500" /><path d="M1 9h20.500M6 1h16q2.300 0 2.300 2.300V20" /><path d="M3.500 6.500h5" strokeDasharray="1.200 1" /></Svg>
            </BigButton>
            <Spacer />
            <SwitchLabel $gap={16} $size={10}>Imprimir Documento<Switch $w={46} defaultChecked /></SwitchLabel>
            <BigButton $w={158} $small>
              Novo Documento
              <Svg w={23} box="-2 0 23 23" c="#fff"><path d="M3 0h11l4 4v17q0 2-2 2H3q-2 0-2-2V2q0-2 2-2z" fill={INK} stroke="none" /><path d="M9.500 9v7M6 12.500h7" strokeWidth="1.500" /></Svg>
            </BigButton>
            <BigButton $w={186} $kind="primary">
              Guardar Documento
              <Svg w={23} box="-2 0 23 23" c={BLUE}><path d="M3 0h11l4 4v17q0 2-2 2H3q-2 0-2-2V2q0-2 2-2z" fill="#fff" stroke="none" /><path d="m6.500 12.500 2 2 4-4" strokeWidth="1.300" /></Svg>
            </BigButton>
          </Footer>
        </Main>
      </Workspace>
      <Taskbar>
        <SystemKeys>
          <TaskItem aria-label="Iniciar"><StartLogo /></TaskItem>
          <TaskItem aria-label="Pesquisar"><TaskSearch /></TaskItem>
          <TaskItem aria-label="Vista de tarefas"><TaskView /></TaskItem>
        </SystemKeys>
        <TaskApps>
          {taskApps.map((t) => (
            <TaskItem key={t.name} aria-label={t.name} $open={!t.closed} $stack={t.stack} $active={t.active}>{t.icon}</TaskItem>
          ))}
        </TaskApps>
        <Tray>
          <Svg w={16} h={8} box="0 0 16 8" c="#fff" sw={1.2}><path d="M2 7 8 1.500 14 7" /></Svg>
          <Svg w={16} box="0 0 16 16" c="#fff"><rect x="3" y="5" width="7" height="7" rx="1" /><path d="M10 7.500 13 5.500v6l-3-2M4 2.500q4-2.500 8 0M4 14.500q4 2 8 0" /></Svg>
          <Svg w={17} h={12} box="0 0 17 12"><path d="M4 11.500a4 4 0 0 1 0-7.500 5 5 0 0 1 9 .5 3.600 3.600 0 0 1 0 7z" fill="#f0f0f0" stroke="none" /></Svg>
          <Svg w={15} h={14} box="0 0 15 14" c="#dcdcdc"><path d="M1.500 13A11.500 11.500 0 0 1 13 2M5 13a8 8 0 0 1 8-7.500M8 13a5 5 0 0 1 5-4.500" /><circle cx="12" cy="12" r="1" fill="#fff" /></Svg>
          <Svg w={16} h={14} box="0 0 16 14" c="#fff"><path d="M1 5h2.500L7 2v10L3.500 9H1zM9 5q1 2 0 4M11 3.500q2.200 3.500 0 7M13 2q3.500 5 0 10" /></Svg>
          <Clock>12:02<br />09/08/2025</Clock>
          <Notices>
            <Svg w={16} h={17} box="0 0 16 17" c="#1e2d3b"><path d="M0 0h16v13H6l-3 3v-3H0z" fill="#fff" stroke="none" /><path d="M3 3.500h10M3 6.500h10M3 9.500h7" /></Svg>
            <NoticeCount>2</NoticeCount>
          </Notices>
        </Tray>
      </Taskbar>
      <ArticlesDialog />
    </Desktop>
  );
}
